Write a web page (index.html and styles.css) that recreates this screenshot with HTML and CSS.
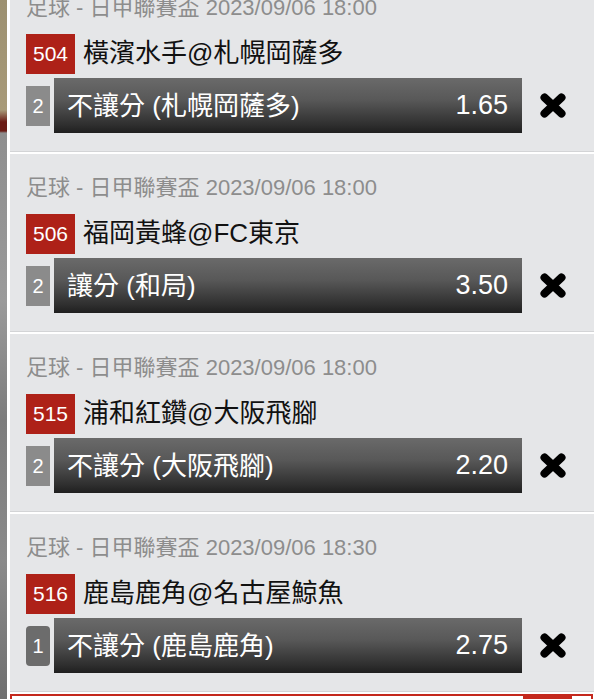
FILE: index.html
```html
<!DOCTYPE html>
<html lang="zh-Hant">
<head>
  <meta charset="UTF-8">
  <meta name="viewport" content="width=device-width, initial-scale=1.0">
  <title>投注單</title>
  <link rel="stylesheet" href="styles.css">
</head>
<body>
  <div class="page">
    <div class="backdrop"></div>
    <div class="slip">
      <div class="bet-list">
        <div class="bet">
          <div class="bet-meta">足球 - 日甲聯賽盃 2023/09/06 18:00</div>
          <div class="bet-match">
            <span class="match-no">504</span>
            <span class="match-name">橫濱水手@札幌岡薩多</span>
          </div>
          <div class="bet-pick">
            <span class="pick-tag">2</span>
            <div class="pick-bar">
              <span class="pick-name">不讓分 (札幌岡薩多)</span>
              <span class="pick-odds">1.65</span>
            </div>
            <a class="pick-remove" href="#"><svg viewBox="0 0 28 25" width="28" height="25"><path d="M5.5 4.5 L22.5 20.5 M22.5 4.5 L5.5 20.5" /></svg></a>
          </div>
        </div>

        <div class="bet">
          <div class="bet-meta">足球 - 日甲聯賽盃 2023/09/06 18:00</div>
          <div class="bet-match">
            <span class="match-no">506</span>
            <span class="match-name">福岡黃蜂@FC東京</span>
          </div>
          <div class="bet-pick">
            <span class="pick-tag">2</span>
            <div class="pick-bar">
              <span class="pick-name">讓分 (和局)</span>
              <span class="pick-odds">3.50</span>
            </div>
            <a class="pick-remove" href="#"><svg viewBox="0 0 28 25" width="28" height="25"><path d="M5.5 4.5 L22.5 20.5 M22.5 4.5 L5.5 20.5" /></svg></a>
          </div>
        </div>

        <div class="bet">
          <div class="bet-meta">足球 - 日甲聯賽盃 2023/09/06 18:00</div>
          <div class="bet-match">
            <span class="match-no">515</span>
            <span class="match-name">浦和紅鑽@大阪飛腳</span>
          </div>
          <div class="bet-pick">
            <span class="pick-tag">2</span>
            <div class="pick-bar">
              <span class="pick-name">不讓分 (大阪飛腳)</span>
              <span class="pick-odds">2.20</span>
            </div>
            <a class="pick-remove" href="#"><svg viewBox="0 0 28 25" width="28" height="25"><path d="M5.5 4.5 L22.5 20.5 M22.5 4.5 L5.5 20.5" /></svg></a>
          </div>
        </div>

        <div class="bet">
          <div class="bet-meta">足球 - 日甲聯賽盃 2023/09/06 18:30</div>
          <div class="bet-match">
            <span class="match-no">516</span>
            <span class="match-name">鹿島鹿角@名古屋鯨魚</span>
          </div>
          <div class="bet-pick">
            <span class="pick-tag pick-tag-dark">1</span>
            <div class="pick-bar">
              <span class="pick-name">不讓分 (鹿島鹿角)</span>
              <span class="pick-odds">2.75</span>
            </div>
            <a class="pick-remove" href="#"><svg viewBox="0 0 28 25" width="28" height="25"><path d="M5.5 4.5 L22.5 20.5 M22.5 4.5 L5.5 20.5" /></svg></a>
          </div>
        </div>
      </div>

      <div class="stake-box">
        <span class="stake-btn"></span>
      </div>
    </div>
  </div>
</body>
</html>
```

FILE: styles.css
```css
body {
  margin: 0;
  padding: 0;
  background: #fff;
  font-family: "Liberation Sans", "Noto Sans CJK TC", sans-serif;
  overflow: hidden;
}

.page {
  display: flex;
  height: 699px;
  overflow: hidden;
}

.backdrop {
  width: 7px;
  margin-right: 3px;
  flex-shrink: 0;
  background: linear-gradient(to bottom,
    #9c9070 0px, #a89a78 110px, #6a1c16 122px, #6a1c16 131px,
    #8e8e8e 133px, #9a9a9a 300px, #7c7c7c 420px, #8a8a8a 560px, #6f6f6f 699px);
}

.slip {
  width: 584px;
  flex-shrink: 0;
  background: #fff;
}

.bet-list {
  margin-top: -26px;
}

.bet {
  background: #e5e6e8;
  padding: 22px 0 18px 16px;
  border-bottom: 1px solid #d3d4d6;
  margin-bottom: 2px;
}

.bet-meta {
  font-size: 22px;
  line-height: 24px;
  color: #8d8d8d;
  white-space: nowrap;
}

.bet-match {
  display: flex;
  align-items: center;
  gap: 8px;
  margin-top: 14px;
  height: 40px;
}

.match-no {
  width: 49px;
  height: 40px;
  line-height: 40px;
  text-align: center;
  background: #ae2118;
  color: #fff;
  font-size: 21px;
}

.match-name {
  font-size: 26px;
  line-height: 1;
  margin-top: -3px;
  color: #111;
  white-space: nowrap;
}

.bet-pick {
  display: flex;
  align-items: center;
  margin-top: 4px;
}

.pick-tag {
  width: 24px;
  height: 40px;
  line-height: 40px;
  text-align: center;
  background: #8b8b8b;
  color: #fff;
  font-size: 20px;
  margin-right: 4px;
}

.pick-tag-dark {
  background: #6c6c6c;
  border-radius: 4px;
}

.pick-bar {
  display: flex;
  align-items: center;
  justify-content: space-between;
  width: 468px;
  height: 55px;
  padding: 0 14px 0 13px;
  box-sizing: border-box;
  background: linear-gradient(to bottom, #6a6a6a 0%, #585858 40%, #2f2f2f 85%, #1f1f1f 100%);
  color: #fff;
  font-size: 26px;
  line-height: 1;
  white-space: nowrap;
}

.pick-odds {
  font-size: 27px;
}

.pick-remove {
  display: block;
  margin-left: 17px;
  height: 25px;
}

.pick-remove svg {
  display: block;
  filter: blur(0.5px);
}

.pick-remove path {
  stroke: #000;
  stroke-width: 8;
  stroke-linecap: round;
  fill: none;
}

.stake-box {
  display: flex;
  justify-content: flex-end;
  height: 40px;
  border: 2px solid #c4281d;
  border-bottom: none;
  padding-right: 19px;
  margin-right: 1px;
}

.stake-btn {
  width: 49px;
  height: 30px;
  background: #c4281d;
}
```
